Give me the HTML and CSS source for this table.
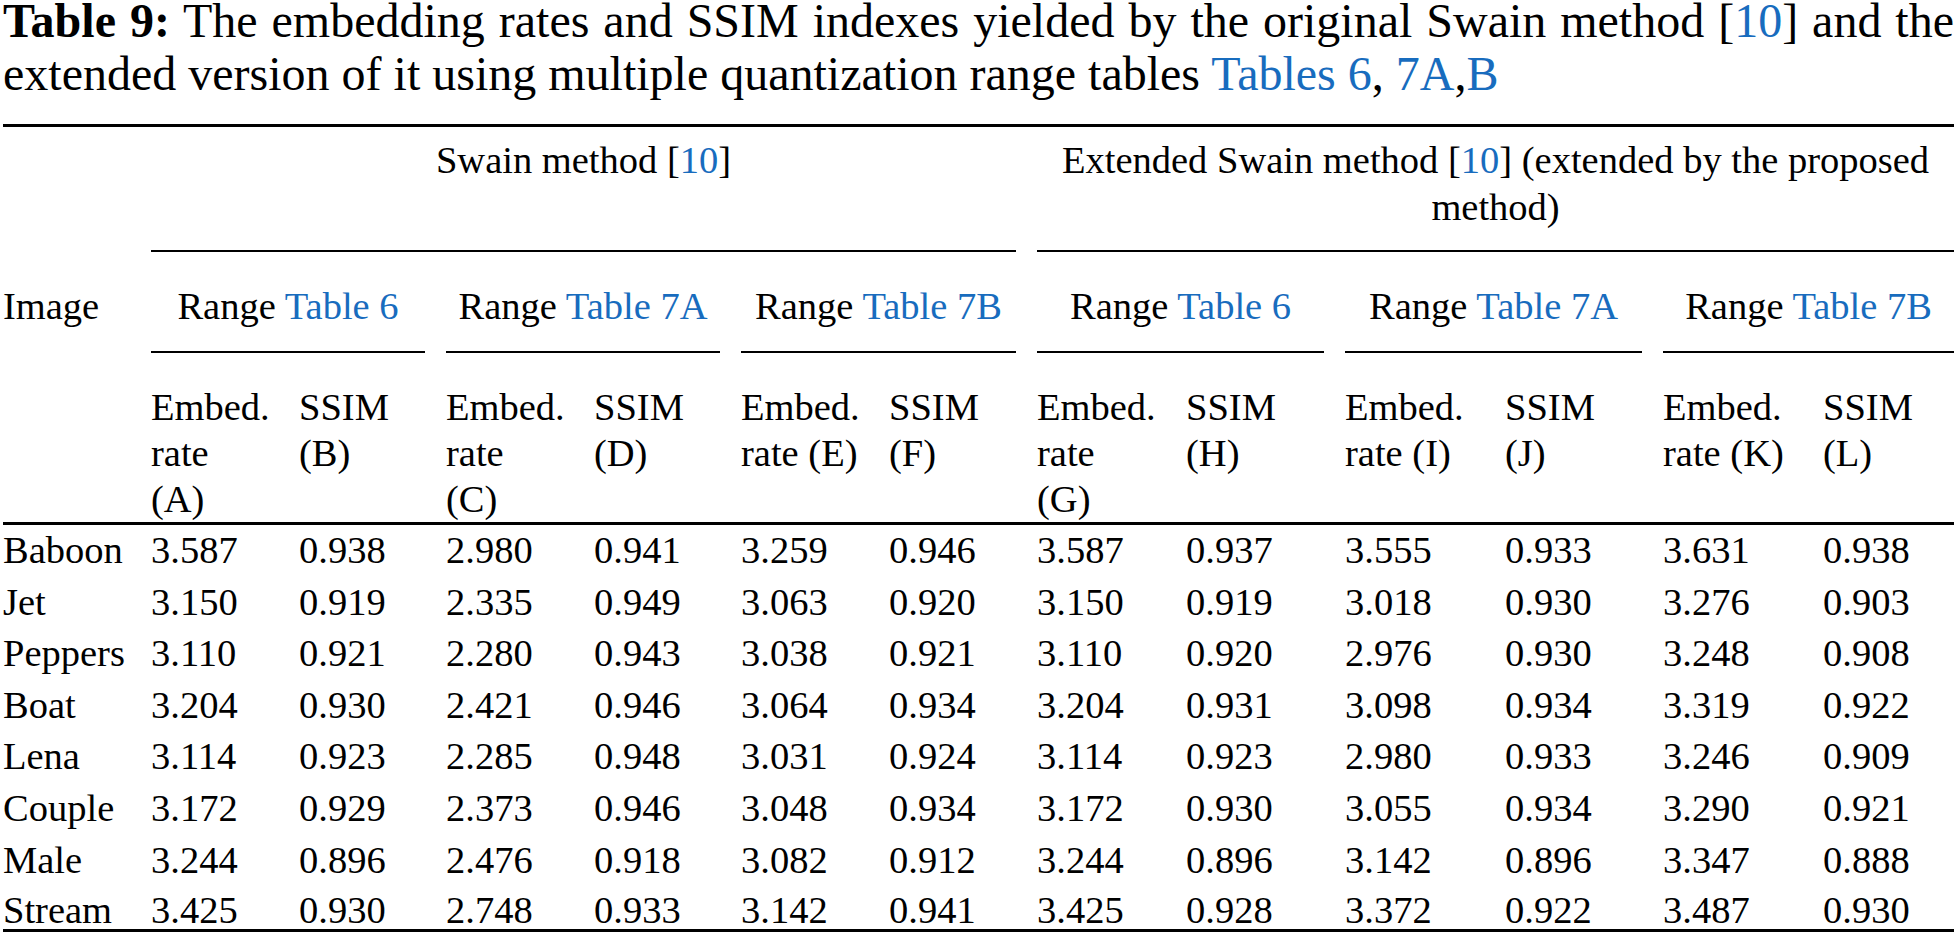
FILE: index.html
```html
<!DOCTYPE html>
<html lang="en">
<head>
<meta charset="utf-8">
<title>Table 9</title>
<link rel="stylesheet" href="styles.css">
</head>
<body>
<div class="page">
  <p class="caption"><b>Table 9:</b> The embedding rates and SSIM indexes yielded by the original Swain method [<span class="ref">10</span>] and the extended version of it using multiple quantization range tables <span class="ref">Tables 6</span>, <span class="ref">7A</span>,<span class="ref">B</span></p>
  <table class="data">
    <colgroup>
      <col class="w148"><col class="w148"><col class="w147"><col class="w148"><col class="w147"><col class="w148"><col class="w148">
      <col class="w149"><col class="w159"><col class="w160"><col class="w158"><col class="w160"><col class="w131">
    </colgroup>
    <thead>
      <tr class="h1">
        <th></th>
        <th colspan="6" class="grp">Swain method [<span class="ref">10</span>]</th>
        <th colspan="6" class="grp last">Extended Swain method [<span class="ref">10</span>] (extended by the proposed method)</th>
      </tr>
      <tr class="h2">
        <th rowspan="2" class="img">Image</th>
        <th colspan="2" class="rng">Range <span class="ref">Table 6</span></th>
        <th colspan="2" class="rng">Range <span class="ref">Table 7A</span></th>
        <th colspan="2" class="rng">Range <span class="ref">Table 7B</span></th>
        <th colspan="2" class="rng">Range <span class="ref">Table 6</span></th>
        <th colspan="2" class="rng">Range <span class="ref">Table 7A</span></th>
        <th colspan="2" class="rng last">Range <span class="ref">Table 7B</span></th>
      </tr>
      <tr class="h3">
        <th>Embed.<br>rate<br>(A)</th><th>SSIM<br>(B)</th>
        <th>Embed.<br>rate<br>(C)</th><th>SSIM<br>(D)</th>
        <th>Embed.<br>rate (E)</th><th>SSIM<br>(F)</th>
        <th>Embed.<br>rate<br>(G)</th><th>SSIM<br>(H)</th>
        <th>Embed.<br>rate (I)</th><th>SSIM<br>(J)</th>
        <th>Embed.<br>rate (K)</th><th>SSIM<br>(L)</th>
      </tr>
    </thead>
    <tbody>
      <tr><td>Baboon</td><td>3.587</td><td>0.938</td><td>2.980</td><td>0.941</td><td>3.259</td><td>0.946</td><td>3.587</td><td>0.937</td><td>3.555</td><td>0.933</td><td>3.631</td><td>0.938</td></tr>
      <tr><td>Jet</td><td>3.150</td><td>0.919</td><td>2.335</td><td>0.949</td><td>3.063</td><td>0.920</td><td>3.150</td><td>0.919</td><td>3.018</td><td>0.930</td><td>3.276</td><td>0.903</td></tr>
      <tr><td>Peppers</td><td>3.110</td><td>0.921</td><td>2.280</td><td>0.943</td><td>3.038</td><td>0.921</td><td>3.110</td><td>0.920</td><td>2.976</td><td>0.930</td><td>3.248</td><td>0.908</td></tr>
      <tr><td>Boat</td><td>3.204</td><td>0.930</td><td>2.421</td><td>0.946</td><td>3.064</td><td>0.934</td><td>3.204</td><td>0.931</td><td>3.098</td><td>0.934</td><td>3.319</td><td>0.922</td></tr>
      <tr><td>Lena</td><td>3.114</td><td>0.923</td><td>2.285</td><td>0.948</td><td>3.031</td><td>0.924</td><td>3.114</td><td>0.923</td><td>2.980</td><td>0.933</td><td>3.246</td><td>0.909</td></tr>
      <tr><td>Couple</td><td>3.172</td><td>0.929</td><td>2.373</td><td>0.946</td><td>3.048</td><td>0.934</td><td>3.172</td><td>0.930</td><td>3.055</td><td>0.934</td><td>3.290</td><td>0.921</td></tr>
      <tr><td>Male</td><td>3.244</td><td>0.896</td><td>2.476</td><td>0.918</td><td>3.082</td><td>0.912</td><td>3.244</td><td>0.896</td><td>3.142</td><td>0.896</td><td>3.347</td><td>0.888</td></tr>
      <tr class="last-row"><td>Stream</td><td>3.425</td><td>0.930</td><td>2.748</td><td>0.933</td><td>3.142</td><td>0.941</td><td>3.425</td><td>0.928</td><td>3.372</td><td>0.922</td><td>3.487</td><td>0.930</td></tr>
    </tbody>
  </table>
</div>
</body>
</html>
```

FILE: styles.css
```css
html, body {
  margin: 0;
  padding: 0;
  background: #ffffff;
}

body {
  color: #000000;
  font-family: "Liberation Serif", "Times New Roman", serif;
}

.page {
  width: 1951px;
  padding-left: 3px;
}

.caption {
  margin: -6px 0 23.6px 0;
  font-size: 48px;
  line-height: 53.2px;
  text-align: justify;
}

.ref {
  color: #186cbe;
}

.data {
  width: 1951px;
  table-layout: fixed;
  border-collapse: separate;
  border-spacing: 0;
  border-top: 3px solid #000;
  border-bottom: 3px solid #000;
  font-size: 38.5px;
}

.w131 { width: 131px; }
.w147 { width: 147px; }
.w148 { width: 148px; }
.w149 { width: 149px; }
.w158 { width: 158px; }
.w159 { width: 159px; }
.w160 { width: 160px; }

th {
  font-weight: normal;
  text-align: left;
  vertical-align: top;
  line-height: 46.5px;
  padding: 0 21px 0 0;
}

.h1 th {
  padding-top: 10px;
  padding-bottom: 22px;
}

.grp,
.rng {
  text-align: center;
  background-image: linear-gradient(#000, #000);
  background-repeat: no-repeat;
  background-position: left bottom;
  background-size: calc(100% - 21px) 2px;
}

.grp.last,
.rng.last {
  padding-right: 0;
  background-size: 100% 2px;
}

.h2 th {
  padding-top: 31px;
  padding-bottom: 23.5px;
}

.h2 th.img {
  padding-bottom: 0;
  border-bottom: 3px solid #000;
}

.h3 th {
  padding-top: 31px;
  line-height: 46px;
  border-bottom: 3px solid #000;
  white-space: nowrap;
}

.h3 th:last-child,
td:last-child {
  padding-right: 0;
}

td {
  line-height: 46px;
  padding: 2px 21px 3.6px 0;
  vertical-align: top;
  white-space: nowrap;
}

.last-row td {
  line-height: 38px;
  padding-top: 5px;
  padding-bottom: 0;
}
```
